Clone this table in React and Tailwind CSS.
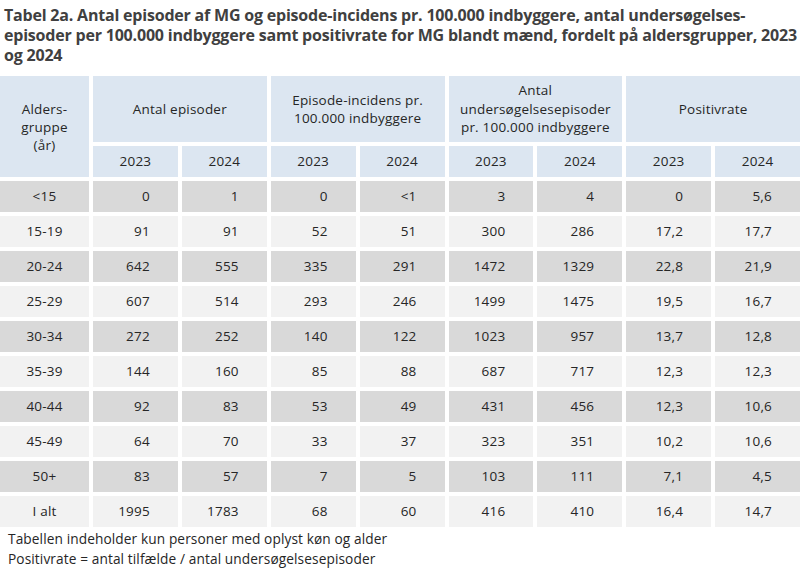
import React from 'react';

const rows = [
  ['<15', '0', '1', '0', '<1', '3', '4', '0', '5,6'],
  ['15-19', '91', '91', '52', '51', '300', '286', '17,2', '17,7'],
  ['20-24', '642', '555', '335', '291', '1472', '1329', '22,8', '21,9'],
  ['25-29', '607', '514', '293', '246', '1499', '1475', '19,5', '16,7'],
  ['30-34', '272', '252', '140', '122', '1023', '957', '13,7', '12,8'],
  ['35-39', '144', '160', '85', '88', '687', '717', '12,3', '12,3'],
  ['40-44', '92', '83', '53', '49', '431', '456', '12,3', '10,6'],
  ['45-49', '64', '70', '33', '37', '323', '351', '10,2', '10,6'],
  ['50+', '83', '57', '7', '5', '103', '111', '7,1', '4,5'],
  ['I alt', '1995', '1783', '68', '60', '416', '410', '16,4', '14,7'],
];

const groups = [
  ['Antal episoder'],
  ['Episode-incidens pr.', '100.000 indbyggere'],
  ['Antal', 'undersøgelsesepisoder', 'pr. 100.000 indbyggere'],
  ['Positivrate'],
];

export default function App() {
  return (
    <div className="w-[800px] h-[571px] bg-white overflow-hidden text-[#262626] font-['Open_Sans',sans-serif]">
      {/* Title */}
      <h1 className="px-[4px] pt-[5px] text-[16px] leading-[20px] font-bold text-[#404040] whitespace-nowrap tracking-[-0.2px]">
        Tabel 2a. Antal episoder af MG og episode-incidens pr. 100.000 indbyggere, antal undersøgelses-
        <br />
        episoder per 100.000 indbyggere samt positivrate for MG blandt mænd, fordelt på aldersgrupper, 2023
        <br />
        og 2024
      </h1>

      {/* Table */}
      <div className="mt-[11px] grid grid-cols-[89px_repeat(8,minmax(0,1fr))] gap-[4px] text-[13.5px] tracking-[0.2px]">
        <div className="row-span-2 bg-[#dce6f1] flex items-center justify-center text-center leading-[18px]">
          Alders-<br />gruppe<br />(år)
        </div>
        {groups.map((g, i) => (
          <div key={i} className="col-span-2 h-[66px] bg-[#dce6f1] flex flex-col items-center justify-center text-center leading-[18.5px] whitespace-nowrap">
            {g.map((l, j) => <span key={j}>{l}</span>)}
          </div>
        ))}
        {Array.from({ length: 8 }).map((_, i) => (
          <div key={i} className="h-[31px] bg-[#dce6f1] flex items-center justify-center">
            {i % 2 === 0 ? '2023' : '2024'}
          </div>
        ))}

        {rows.map((r, ri) => (
          <React.Fragment key={ri}>
            {r.map((c, ci) => (
              <div
                key={ci}
                className={`h-[31px] flex items-center ${ri % 2 === 0 ? 'bg-[#d9d9d9]' : 'bg-[#f2f2f2]'} ${ci === 0 ? 'justify-center' : 'justify-end pr-[28px]'}`}
              >
                {c}
              </div>
            ))}
          </React.Fragment>
        ))}
      </div>

      {/* Notes */}
      <div className="mt-[2px] pl-[8px] text-[13.7px] leading-[20px] tracking-[0.1px]">
        <p>Tabellen indeholder kun personer med oplyst køn og alder</p>
        <p>Positivrate = antal tilfælde / antal undersøgelsesepisoder</p>
      </div>
    </div>
  );
}
